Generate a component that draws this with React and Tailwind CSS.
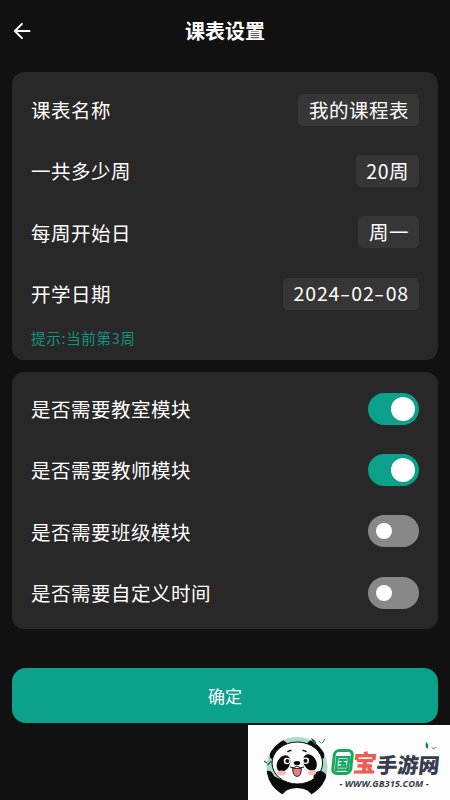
import { useState } from 'react';

const fields = [
  { label: '课表名称', value: '我的课程表' },
  { label: '一共多少周', value: '20周' },
  { label: '每周开始日', value: '周一' },
  { label: '开学日期', value: '2024-02-08', isDate: true },
];

const modules = [
  { label: '是否需要教室模块', enabled: true },
  { label: '是否需要教师模块', enabled: true },
  { label: '是否需要班级模块', enabled: false },
  { label: '是否需要自定义时间', enabled: false },
];

// Dates get wider hyphens than the font's own
function FieldValue({ text }) {
  return text.split('-').map((part, i) => (
    <span key={i}>
      {i > 0 && <span className="mx-[1.7px] inline-block origin-center scale-x-150">-</span>}
      {part}
    </span>
  ));
}

function Toggle({ on, onClick }) {
  return (
    <button
      type="button"
      role="switch"
      aria-checked={on}
      onClick={onClick}
      className={`flex h-8 w-[51px] items-center rounded-full ${
        on ? 'justify-end bg-[#0ca18b] pr-1' : 'justify-start bg-[#888888] pl-2'
      }`}
    >
      <span className={`rounded-full bg-white ${on ? 'size-6' : 'size-4'}`} />
    </button>
  );
}

function Panda() {
  return (
    <svg viewBox="0 0 66 64" className="h-16 w-[66px] shrink-0" aria-hidden="true">
      <defs>
        <clipPath id="badge">
          <circle cx="33" cy="33.5" r="30.5" />
        </clipPath>
      </defs>
      <circle cx="33" cy="33.5" r="30.5" fill="#a9dcc8" />
      <g clipPath="url(#badge)">
        {/* Body and arms */}
        <path d="M0 38 Q7 34 10 42 L20 47 H46 L50 43 Q52 36 57 37 Q62 38 66 48 V64 H0Z" fill="#0b0b0b" />
        {/* Ears */}
        <path d="M6 24 Q4 8 18 5 L24 10 L10 26Z" fill="#0b0b0b" />
        <path d="M60 24 Q62 8 48 5 L42 10 L56 26Z" fill="#0b0b0b" />
      </g>
      <path d="M17 64 Q20 54 33 54 Q46 54 49 64Z" fill="#fcfdfc" />
      <ellipse cx="33.3" cy="29" rx="25.3" ry="21" fill="#fff" stroke="#0b0b0b" strokeWidth="1" />
      <circle cx="55.5" cy="43" r="6" fill="#0b0b0b" />
      {/* Face */}
      <ellipse cx="19.5" cy="29.5" rx="6.2" ry="8.8" transform="rotate(28 19.5 29.5)" fill="#0b0b0b" />
      <ellipse cx="46" cy="28.5" rx="6.2" ry="8.8" transform="rotate(-28 46 28.5)" fill="#0b0b0b" />
      <circle cx="23" cy="27" r="3.3" fill="#fff" />
      <circle cx="41.8" cy="26.8" r="3.3" fill="#fff" />
      <circle cx="23.3" cy="27" r="2" fill="#111" />
      <circle cx="41.5" cy="26.8" r="2" fill="#111" />
      <ellipse cx="33" cy="29" rx="3.3" ry="2" fill="#0b0b0b" />
      <path d="M26 33 Q30 35 33 32 Q36 35 40 33" fill="none" stroke="#0b0b0b" strokeWidth="1" />
      <path d="M28.5 34.5 H37.5 Q37 42.5 33 42.5 Q29 42.5 28.5 34.5Z" fill="#f0787c" stroke="#0b0b0b" strokeWidth="0.8" />
      <ellipse cx="17.5" cy="39" rx="4.2" ry="2.6" fill="#f9b9b0" />
      <ellipse cx="48" cy="38.5" rx="4.2" ry="2.6" fill="#f9b9b0" />
      <path d="M23.5 18 q2 -2 4 -1.5 M38.5 16.5 q2 -.5 4 1.5" fill="none" stroke="#0b0b0b" strokeWidth="1.5" />
      {/* Leaves */}
      <path d="M47 4 q6 2 5 7 q-4 -2 -5 -7Z" fill="#1b6b4d" />
      <path d="M55 7 l2 2 M60.5 5 l-1 3 l-2 1" fill="none" stroke="#4d8f77" strokeWidth="1" />
      <path d="M0 27 l3 2 M3.5 31 l4 -4" fill="none" stroke="#1b6b4d" strokeWidth="1.3" />
    </svg>
  );
}

function Watermark() {
  return (
    <div className="absolute right-0 bottom-0 flex h-[75px] w-[202px] bg-[#fcfdfc] pt-[9px] pl-4">
      <Panda />
      <div className="flex w-[112px] shrink-0 flex-col items-center pt-[14px]">
        <div className="relative flex h-[28px] -skew-x-6 items-center leading-none font-black text-[#393c50]">
          <span className="flex h-[26px] w-[21px] items-center justify-center rounded-[6px] border-[3px] border-[#17a862] text-[17px] text-[#17a862]">国</span>
          <span className="text-[24px] text-[#f25b53]">宝</span>
          <span className="pt-1 text-[21px]">手游网</span>
          <svg viewBox="0 0 14 10" className="absolute -top-[7px] right-1 h-[10px] w-[14px]" aria-hidden="true">
            <path d="M2 1 q4 3 2 7 q-3 -2 -2 -7Z" fill="#1b7b58" />
            <path d="M8 6 l2 2 l3 -2" fill="none" stroke="#7fa596" />
          </svg>
        </div>
        <span className="mt-[2px] mr-1 font-['Open_Sans'] text-[9.3px] leading-3 font-bold whitespace-nowrap text-[#393c50] italic">
          - WWW.GB315.COM -
        </span>
      </div>
    </div>
  );
}

export default function App() {
  const [switches, setSwitches] = useState(modules.map((m) => m.enabled));

  const toggle = (index) => {
    setSwitches(switches.map((on, i) => (i === index ? !on : on)));
  };

  return (
    <div className="relative h-[800px] w-[450px] overflow-hidden bg-[#111111] px-3 font-['Noto_Sans_CJK_SC',sans-serif] text-white">
      <header className="grid h-[72px] grid-cols-[20px_1fr_20px] items-start pt-[15px]">
        <button type="button" aria-label="返回" className="flex h-[31px] items-center">
          <svg viewBox="0 0 20 20" className="size-5" fill="none" stroke="#fff" strokeWidth="1.9" strokeLinecap="round" strokeLinejoin="round">
            <path d="M17.5 10H3M10 2.8L2.8 10L10 17.2" />
          </svg>
        </button>
        <h1 className="text-center text-[20px] leading-[31px] font-bold">课表设置</h1>
      </header>

      <section className="h-[287.5px] rounded-xl bg-[#282828] px-[19px] pt-[7px]">
        {fields.map((field) => (
          <div key={field.label} className="flex h-[61.3px] items-center justify-between">
            <span className="text-[19.5px] tracking-[0.5px]">{field.label}</span>
            <span
              className={`h-8 rounded-[5px] bg-[#363636] pr-[10px] pl-[10.5px] text-[19.5px] ${
                field.isDate ? 'leading-[29px] tracking-[0.85px]' : 'leading-[31px] tracking-[0.5px]'
              }`}
            >
              <FieldValue text={field.value} />
            </span>
          </div>
        ))}
        <p className="pt-1 text-[14.5px] leading-5 tracking-[0.7px] text-[#179280]">提示:当前第3周</p>
      </section>

      <section className="mt-[12.5px] h-[257px] rounded-xl bg-[#282828] px-[19px] pt-[6px]">
        {modules.map((module, i) => (
          <div key={module.label} className="flex h-[61.3px] items-center justify-between">
            <span className="text-[19.5px] tracking-[0.5px]">{module.label}</span>
            <Toggle on={switches[i]} onClick={() => toggle(i)} />
          </div>
        ))}
      </section>

      <button type="button" className="mt-[38.5px] h-[55.5px] w-full rounded-[14px] bg-[#0ca18b] text-[17px]">
        确定
      </button>

      <Watermark />
    </div>
  );
}
